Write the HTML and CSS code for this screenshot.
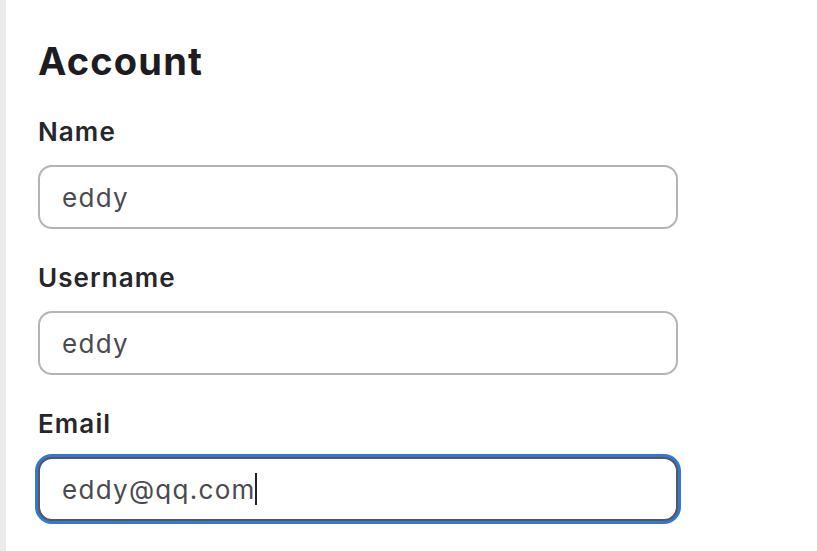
FILE: index.html
```html
<!DOCTYPE html>
<html>
<head>
<meta charset="utf-8">
<link rel="stylesheet" href="styles.css">
</head>
<body>
<main class="page">
  <h1 class="title">Account</h1>
  <form class="form">
    <div class="field">
      <label class="label" for="name">Name</label>
      <input class="input" id="name" type="text" value="eddy">
    </div>
    <div class="field">
      <label class="label" for="username">Username</label>
      <input class="input" id="username" type="text" value="eddy">
    </div>
    <div class="field">
      <label class="label" for="email">Email</label>
      <div class="input-wrap">
        <input class="input input-focus" id="email" type="text" value="eddy@qq.com">
        <div class="caret-layer" aria-hidden="true"><span class="ghost">eddy@qq.com</span><span class="caret"></span></div>
      </div>
    </div>
  </form>
</main>
</body>
</html>
```

FILE: styles.css
```css
html, body {
  margin: 0;
  padding: 0;
  background: #ffffff;
  height: 100%;
}
body {
  font-family: Inter, "Noto Sans", sans-serif;
  color: #1d1d22;
}
.page {
  border-left: 6px solid #ebebee;
  min-height: 100%;
  box-sizing: border-box;
  padding: 38px 0 0 32px;
}
.title {
  margin: 0 0 32px 0;
  font-size: 38px;
  font-weight: 700;
  line-height: 46px;
  letter-spacing: 1.2px;
  color: #1c1c21;
}
.form {
  display: flex;
  flex-direction: column;
  gap: 33px;
}
.field {
  display: flex;
  flex-direction: column;
  gap: 18px;
}
.label {
  font-size: 26px;
  font-weight: 600;
  line-height: 31px;
  letter-spacing: 1.1px;
  color: #26262b;
}
.input-wrap {
  position: relative;
  width: 640px;
}
.input {
  display: block;
  width: 640px;
  height: 64px;
  box-sizing: border-box;
  border: 2px solid #b4b4b8;
  border-radius: 14px;
  padding: 0 22px;
  font-family: Inter, "Noto Sans", sans-serif;
  font-size: 26px;
  letter-spacing: 1.3px;
  color: #4a4a50;
  background: #ffffff;
  outline: none;
  caret-color: transparent;
}
.input-focus {
  border-color: #56565c;
  box-shadow: 0 0 0 3px #2f78d4;
}
.caret-layer {
  position: absolute;
  left: 24px;
  top: 0;
  height: 64px;
  display: flex;
  align-items: center;
  font-size: 26px;
  letter-spacing: 1.3px;
  pointer-events: none;
}
.ghost {
  visibility: hidden;
  white-space: pre;
}
.caret {
  width: 2px;
  height: 32px;
  margin-left: -1px;
  background: #222226;
}
```
